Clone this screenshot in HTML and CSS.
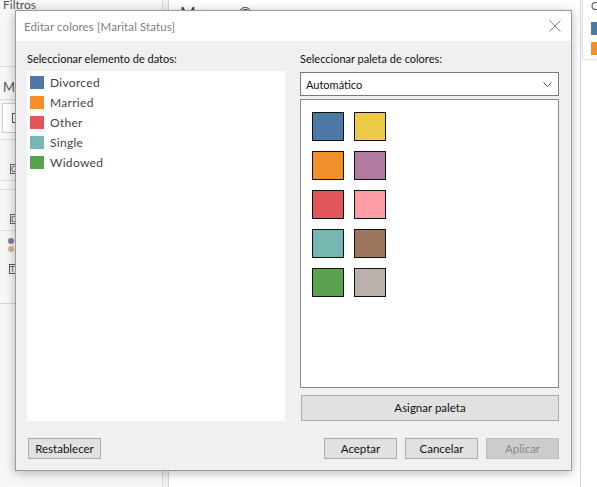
FILE: index.html
```html
<!DOCTYPE html>
<html lang="es">
<head>
<meta charset="utf-8">
<link rel="stylesheet" href="styles.css">
</head>
<body>
<div class="app">
  <aside class="side">
    <div class="side-title">Filtros</div>
    <div class="shelf-gap"></div>
    <div class="side-label">Marcas</div>
    <div class="mark-select"><span class="sq"></span></div>
    <div class="mark-cards">
      <div class="mcard"><span class="mc-letter">C</span></div>
      <div class="mcard"><span class="mc-letter">D</span></div>
    </div>
    <div class="dots">
      <span class="dot dot-a"></span>
      <span class="dot dot-b"></span>
    </div>
    <div class="tbox"><span class="sq sq-t">T</span></div>
    <div class="side-rest"></div>
  </aside>
  <div class="gutter"></div>
  <main class="canvas">
    <div class="canvas-title">Marcas ©</div>
  </main>
  <aside class="legend">
    <div class="legend-card">
      <div class="legend-title">C</div>
      <div class="legend-item"><span class="lsw c-blue"></span></div>
      <div class="legend-item"><span class="lsw c-orange"></span></div>
    </div>
  </aside>
</div>

<div class="dialog">
  <div class="dlg-title">
    <span class="dlg-caption">Editar colores [Marital Status]</span>
    <svg class="dlg-close" width="12" height="12" viewBox="0 0 12 12"><path d="M0.5 0.5 L11.5 11.5 M11.5 0.5 L0.5 11.5" stroke="#8a8a8a" stroke-width="1" fill="none"/></svg>
  </div>
  <div class="dlg-body">
    <div class="cols">
      <section class="col col-left">
        <div class="label">Seleccionar elemento de datos:</div>
        <ul class="items">
          <li class="item"><span class="sw c-blue"></span>Divorced</li>
          <li class="item"><span class="sw c-orange"></span>Married</li>
          <li class="item"><span class="sw c-red"></span>Other</li>
          <li class="item"><span class="sw c-teal"></span>Single</li>
          <li class="item"><span class="sw c-green"></span>Widowed</li>
        </ul>
      </section>
      <section class="col col-right">
        <div class="label">Seleccionar paleta de colores:</div>
        <div class="select">
          <span>Automático</span>
          <svg width="9" height="5" viewBox="0 0 9 5"><path d="M0.5 0.5 L4.5 4.5 L8.5 0.5" stroke="#555" stroke-width="1" fill="none"/></svg>
        </div>
        <div class="palette">
          <span class="psw c-blue"></span><span class="psw c-yellow"></span>
          <span class="psw c-orange"></span><span class="psw c-purple"></span>
          <span class="psw c-red"></span><span class="psw c-pink"></span>
          <span class="psw c-teal"></span><span class="psw c-brown"></span>
          <span class="psw c-green"></span><span class="psw c-gray"></span>
        </div>
        <button class="btn btn-wide">Asignar paleta</button>
      </section>
    </div>
    <div class="footer">
      <button class="btn">Restablecer</button>
      <div class="footer-right">
        <button class="btn">Aceptar</button>
        <button class="btn">Cancelar</button>
        <button class="btn btn-disabled">Aplicar</button>
      </div>
    </div>
  </div>
</div>
</body>
</html>
```
FILE: styles.css
```css
* { box-sizing: border-box; }
html, body { margin: 0; padding: 0; }
body {
  width: 597px;
  height: 487px;
  overflow: hidden;
  font-family: Lato, "Noto Sans", sans-serif;
  font-size: 11px;
  color: #222;
  background: #fff;
  position: relative;
}

/* background application */
.app {
  display: flex;
  height: 487px;
}
.side {
  width: 163px;
  background: #f7f7f7;
  border-right: 1px solid #d6d6d6;
  display: flex;
  flex-direction: column;
}
.side-title {
  padding-left: 3px;
  font-size: 12px;
  color: #555;
  height: 10px;
  line-height: 10px;
}
.shelf-gap {
  height: 57px;
  border-bottom: 1px solid #dcdcdc;
}
.side-label {
  padding: 13px 0 0 3px;
  height: 33px;
  font-size: 13px;
  color: #555;
  line-height: 15px;
  border-bottom: 1px solid #dcdcdc;
}
.mark-select {
  height: 30px;
  margin: 3px 0 0 2px;
  border: 1px solid #cfcfcf;
  background: #fff;
  display: flex;
  align-items: center;
  padding-left: 9px;
}
.sq {
  width: 6px;
  height: 10px;
  border: 1px solid #555;
  border-right: none;
  display: inline-block;
  font-size: 8px;
  line-height: 8px;
  color: #555;
}
.mark-cards {
  display: flex;
  flex-direction: column;
  gap: 8px;
  margin-top: 6px;
}
.mcard {
  height: 42px;
  border-top: 1px solid #dcdcdc;
  border-bottom: 1px solid #dcdcdc;
  display: flex;
  align-items: flex-end;
  padding: 0 0 6px 10px;
  font-size: 10px;
  color: #555;
}
.mc-letter {
  display: inline-block;
  width: 7px;
  border: 1px solid #666;
  border-right: none;
  height: 10px;
  line-height: 8px;
  font-size: 8px;
}
.dots {
  display: flex;
  flex-direction: column;
  gap: 2px;
  padding: 7px 0 0 8px;
}
.dot {
  width: 6px;
  height: 6px;
  border-radius: 50%;
}
.dot-a { background: #8a7aa0; }
.dot-b { background: #d8b48e; }
.tbox {
  padding: 9px 0 0 9px;
  height: 24px;
}
.sq-t { width: 7px; }
.side-rest {
  margin-top: 27px;
  border-top: 1px solid #d6d6d6;
  flex: 1;
}
.gutter {
  width: 6px;
  background: #f0f0f0;
  border-right: 1px solid #d6d6d6;
}
.canvas {
  flex: 1;
  background: #fff;
  border-right: 1px solid #d6d6d6;
}
.canvas-title {
  padding: 4px 0 0 11px;
  font-size: 17px;
  color: #444;
  line-height: 20px;
}
.legend {
  width: 16px;
  background: #fff;
  padding-left: 1px;
}
.legend-card {
  height: 60px;
  border-left: 1px solid #e0e0e0;
  border-bottom: 1px solid #e0e0e0;
  padding: 0 0 0 8px;
}
.legend-title {
  font-size: 11px;
  height: 22px;
  line-height: 12px;
  color: #555;
}
.legend-item { height: 20px; }
.lsw {
  display: block;
  width: 10px;
  height: 13px;
}

/* dialog */
.dialog {
  position: absolute;
  left: 15px;
  top: 10px;
  width: 557px;
  height: 461px;
  background: #f0f0f0;
  border: 1px solid #9a9a9a;
  box-shadow: 0 2px 10px rgba(0, 0, 0, 0.28);
  display: flex;
  flex-direction: column;
}
.dlg-title {
  height: 30px;
  background: #fff;
  display: flex;
  align-items: center;
  justify-content: space-between;
  padding: 0 10px 0 8px;
}
.dlg-caption {
  color: #808080;
  font-size: 11.5px;
  letter-spacing: 0.1px;
}
.dlg-close { display: block; }
.dlg-body {
  flex: 1;
  display: flex;
  flex-direction: column;
  padding: 10px 12px 11px 11px;
}
.cols {
  display: flex;
  gap: 15px;
  height: 370px;
}
.col {
  display: flex;
  flex-direction: column;
}
.col-left { width: 258px; }
.col-right { width: 259px; }
.label {
  height: 16px;
  line-height: 16px;
  color: #111;
  font-size: 11px;
}
.items {
  list-style: none;
  margin: 4px 0 0;
  padding: 1px 3px;
  background: #fff;
  flex: 1;
}
.item {
  height: 20px;
  display: flex;
  align-items: center;
  color: #444;
  font-size: 12px;
  letter-spacing: 0.3px;
}
.sw {
  width: 14px;
  height: 13px;
  margin-right: 6px;
  flex: none;
}
.select {
  margin-top: 5px;
  height: 24px;
  background: #fff;
  border: 1px solid #7a7a7a;
  display: flex;
  align-items: center;
  justify-content: space-between;
  padding: 0 6px 0 5px;
  color: #111;
}
.palette {
  margin-top: 3px;
  height: 289px;
  background: #fff;
  border: 1px solid #8a8a8a;
  display: grid;
  grid-template-columns: repeat(2, 32px);
  grid-auto-rows: 29px;
  column-gap: 10px;
  row-gap: 10px;
  padding: 12px 0 0 11px;
  align-content: start;
}
.psw {
  border: 1px solid #111;
}
.btn {
  font-family: inherit;
  font-size: 11.5px;
  color: #111;
  background: #e1e1e1;
  border: 1px solid #adadad;
  height: 21px;
  width: 73px;
  padding: 0;
  line-height: 18px;
}
.btn-wide {
  margin-top: 7px;
  width: 258px;
  height: 26px;
  margin-left: 1px;
}
.btn-disabled {
  background: #cccccc;
  border-color: #bfbfbf;
  color: #8a8a8a;
}
.footer {
  margin-top: auto;
  display: flex;
  justify-content: space-between;
  padding-left: 1px;
}
.footer-right {
  display: flex;
  gap: 8px;
}

.c-blue { background: #4e79a7; }
.c-orange { background: #f28e2b; }
.c-red { background: #e15759; }
.c-teal { background: #76b7b2; }
.c-green { background: #59a14f; }
.c-yellow { background: #edc948; }
.c-purple { background: #b07aa1; }
.c-pink { background: #ff9da7; }
.c-brown { background: #9c755f; }
.c-gray { background: #bab0ac; }
```
